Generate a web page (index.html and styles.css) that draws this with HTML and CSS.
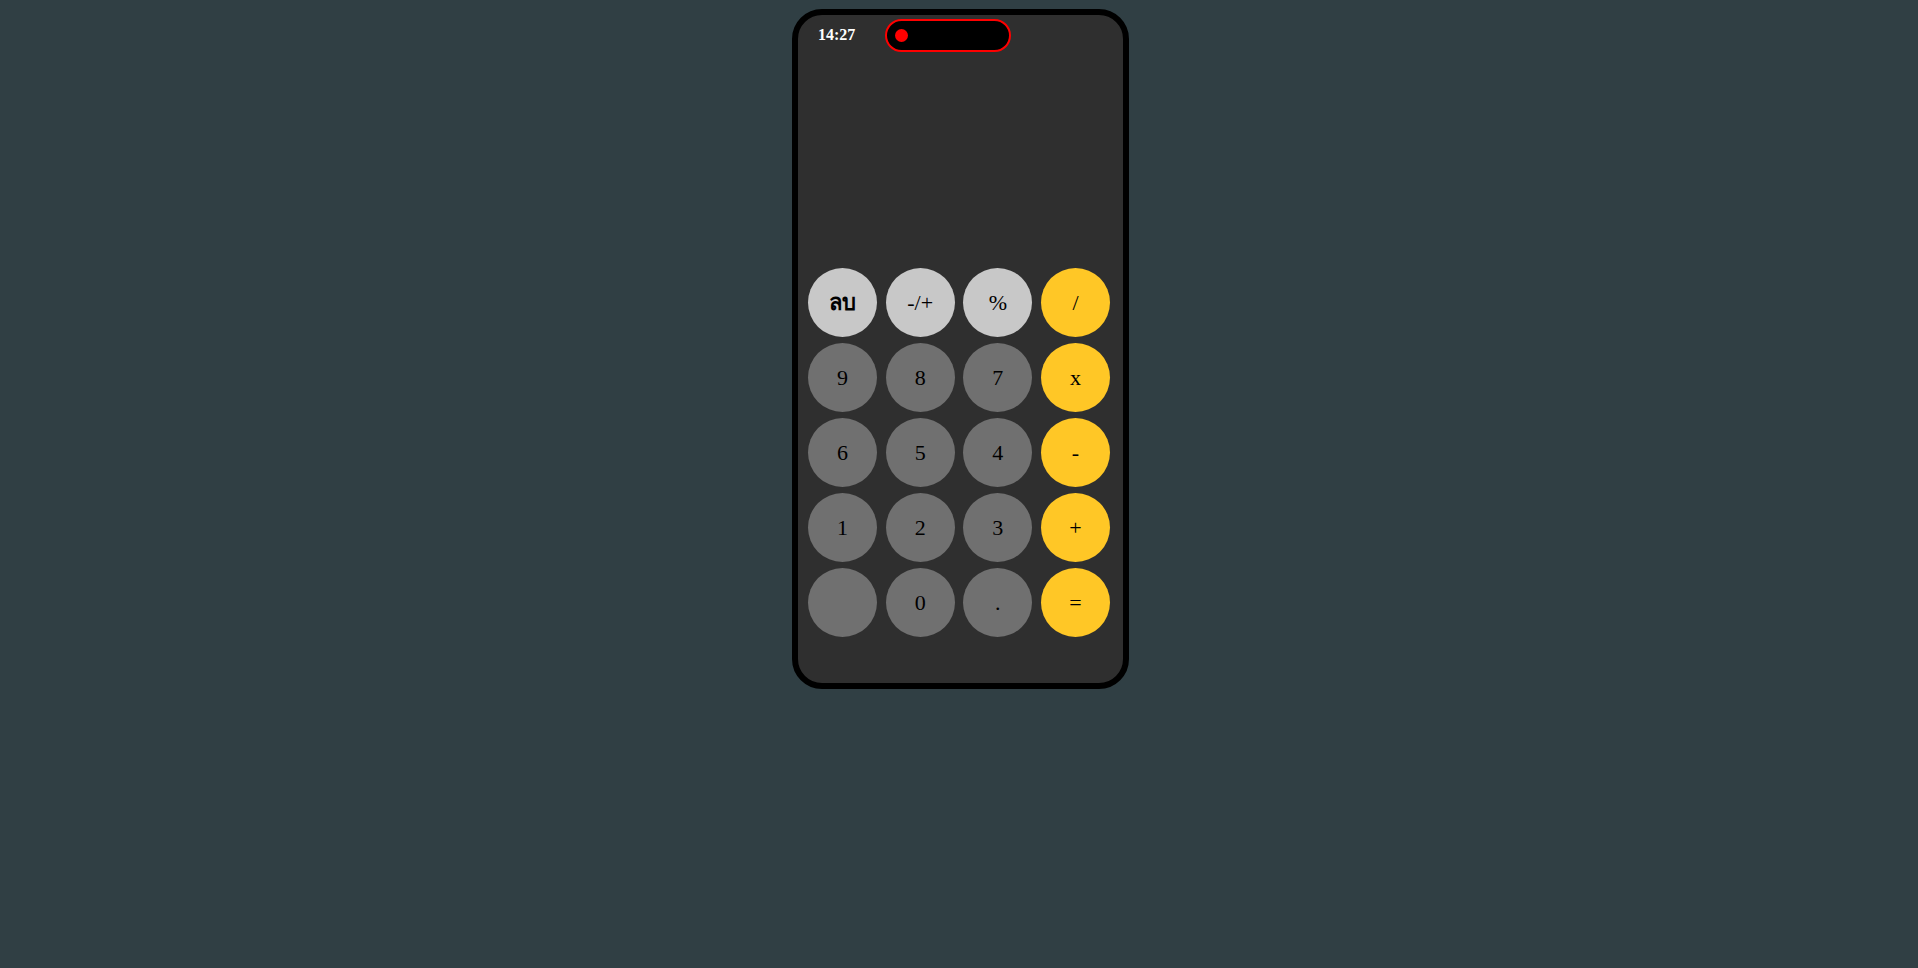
FILE: index.html
```html
<!DOCTYPE html>
<html lang="th">
<head>
<meta charset="utf-8">
<title>Calculator</title>
<link rel="stylesheet" href="styles.css">
</head>
<body>
<div class="phone">
  <div class="status">
    <span class="time">14:27</span>
    <div class="island"><span class="dot"></span></div>
  </div>
  <div class="display"></div>
  <div class="keypad">
    <button class="key light thai">ลบ</button>
    <button class="key light">-/+</button>
    <button class="key light">%</button>
    <button class="key op">/</button>
    <button class="key">9</button>
    <button class="key">8</button>
    <button class="key">7</button>
    <button class="key op">x</button>
    <button class="key">6</button>
    <button class="key">5</button>
    <button class="key">4</button>
    <button class="key op">-</button>
    <button class="key">1</button>
    <button class="key">2</button>
    <button class="key">3</button>
    <button class="key op">+</button>
    <button class="key"></button>
    <button class="key">0</button>
    <button class="key">.</button>
    <button class="key op">=</button>
  </div>
</div>
</body>
</html>
```
FILE: styles.css
```css
html, body {
  margin: 0;
  padding: 0;
}
body {
  background: #303f44;
  min-height: 968px;
  font-family: "Liberation Serif", "Times New Roman", serif;
  padding-top: 9px;
  padding-left: 3px;
  box-sizing: border-box;
}
.phone {
  width: 325px;
  height: 668px;
  margin: 0 auto;
  border: 6px solid #000;
  border-radius: 30px;
  background: #2f2f2f;
  display: flex;
  flex-direction: column;
}
.status {
  display: flex;
  align-items: center;
  padding: 4px 0 0 20px;
  gap: 30px;
}
.time {
  color: #fff;
  font-weight: bold;
  font-size: 16px;
  line-height: 18px;
  width: 37px;
  margin-top: -1px;
}
.island {
  box-sizing: border-box;
  width: 126px;
  height: 33px;
  border: 2px solid #ff0000;
  border-radius: 17px;
  background: #000;
  display: flex;
  align-items: center;
  padding-left: 8px;
}
.dot {
  width: 13px;
  height: 13px;
  border-radius: 50%;
  background: #ff0000;
}
.display {
  height: 216px;
}
.keypad {
  display: grid;
  grid-template-columns: repeat(4, 69px);
  grid-auto-rows: 69px;
  column-gap: 8.67px;
  row-gap: 6px;
  padding-left: 10px;
}
.key {
  width: 69px;
  height: 69px;
  border: none;
  border-radius: 50%;
  background: #707070;
  color: #000;
  font-family: "Liberation Serif", "Times New Roman", serif;
  font-size: 22px;
  padding: 0;
  margin: 0;
}
.key.light {
  background: #c8c8c8;
}
.key.op {
  background: #ffc726;
}
.key.thai {
  font-weight: bold;
}
```
